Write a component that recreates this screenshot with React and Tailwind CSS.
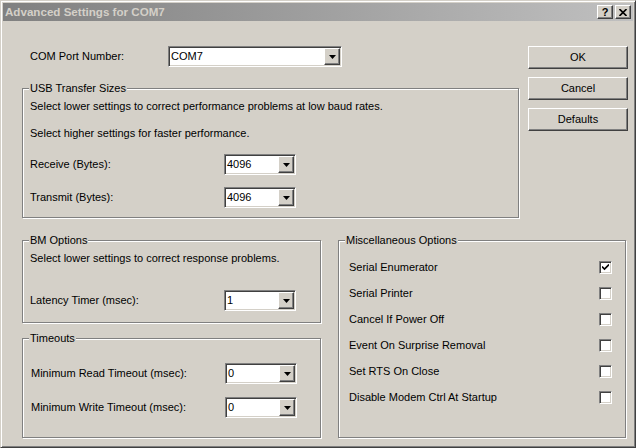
import React from 'react';

// Win2000 classic "Advanced Settings" dialog for an FTDI serial port

const raised =
  'border border-t-white border-l-white border-r-[#404040] border-b-[#404040] shadow-[inset_-1px_-1px_0_#808080]';
const sunken =
  'border border-t-[#808080] border-l-[#808080] border-r-white border-b-white shadow-[inset_1px_1px_0_#404040,inset_-1px_-1px_0_#d4d0c8]';

const Arrow = () => (
  <svg width="7" height="4" viewBox="0 0 7 4">
    <polygon points="0,0 7,0 3.5,4" fill="#000" />
  </svg>
);

const Combo = ({ value, width }) => (
  <div className={`flex h-[21px] items-stretch bg-white ${sunken} ${width}`}>
    <span className="flex flex-1 items-center pl-[2px] leading-[13px]">{value}</span>
    <div className={`m-[1px] flex w-[16px] items-center justify-center bg-[#d4d0c8] ${raised}`}>
      <Arrow />
    </div>
  </div>
);

const Group = ({ title, className, children }) => (
  <div className={`relative border border-[#808080] shadow-[inset_1px_1px_0_#fff,1px_1px_0_#fff] ${className}`}>
    <span className="absolute -top-[7px] left-[6px] bg-[#d4d0c8] px-[1px] leading-[13px]">{title}</span>
    {children}
  </div>
);

const Field = ({ label, value, className = '' }) => (
  <div className={`flex h-[21px] items-center ${className}`}>
    <span className="w-[194px] leading-[13px]">{label}</span>
    <Combo value={value} width="w-[72px]" />
  </div>
);

const Button = ({ children }) => (
  <button className={`flex h-[23px] w-[100px] items-center justify-center bg-[#d4d0c8] leading-[13px] ${raised}`}>
    {children}
  </button>
);

const CheckBox = ({ checked }) => (
  <div className={`flex h-[13px] w-[13px] items-center justify-center bg-white ${sunken}`}>
    {checked && (
      <svg width="7" height="7" viewBox="0 0 7 7">
        <path d="M0 2.5 L2.5 5 L7 0.5" stroke="#000" strokeWidth="1.6" fill="none" />
      </svg>
    )}
  </div>
);

const misc = [
  ['Serial Enumerator', true],
  ['Serial Printer', false],
  ['Cancel If Power Off', false],
  ['Event On Surprise Removal', false],
  ['Set RTS On Close', false],
  ['Disable Modem Ctrl At Startup', false],
];

export default function App() {
  return (
    <div className="h-[448px] w-[636px] border border-t-[#d4d0c8] border-l-[#d4d0c8] border-r-[#404040] border-b-[#404040] bg-[#d4d0c8] p-[2px] font-['Liberation_Sans',Arial,sans-serif] text-[11px] text-black shadow-[inset_1px_1px_0_#fff,inset_-1px_-1px_0_#808080]">
      {/* title bar (inactive) */}
      <div className="flex h-[18px] items-center bg-linear-to-r from-[#808080] to-[#c0c0c0] pl-[2px] pr-[2px]">
        <span className="flex-1 text-[11.6px] font-bold leading-[14px] text-[#d4d0c8]">Advanced Settings for COM7</span>
        <div className={`flex h-[14px] w-[16px] items-center justify-center bg-[#d4d0c8] text-[11px] font-bold leading-none ${raised}`}>
          ?
        </div>
        <div className={`ml-[2px] flex h-[14px] w-[16px] items-center justify-center bg-[#d4d0c8] ${raised}`}>
          <svg width="8" height="7" viewBox="0 0 8 7">
            <path d="M0.5 0 L7.5 7 M7.5 0 L0.5 7" stroke="#000" strokeWidth="1.6" />
          </svg>
        </div>
      </div>

      <div className="pl-[19px] pt-[25px]">
        <div className="flex">
          <div className="w-[497px]">
            <div className="flex h-[21px] items-center">
              <span className="w-[146px] pl-[8px] leading-[13px]">COM Port Number:</span>
              <Combo value="COM7" width="w-[174px]" />
            </div>

            <Group title="USB Transfer Sizes" className="mt-[21px] h-[130px] pl-[7px] pt-[11px]">
              <p className="leading-[13px]">Select lower settings to correct performance problems at low baud rates.</p>
              <p className="mt-[14px] leading-[13px]">Select higher settings for faster performance.</p>
              <Field label="Receive (Bytes):" value="4096" className="mt-[14px]" />
              <Field label="Transmit (Bytes):" value="4096" className="mt-[12px]" />
            </Group>
          </div>

          <div className="ml-[9px] flex flex-col gap-[8px]">
            <Button>OK</Button>
            <Button>Cancel</Button>
            <Button>Defaults</Button>
          </div>
        </div>

        <div className="mt-[22px] flex">
          <div className="w-[299px]">
            <Group title="BM Options" className="h-[83px] pl-[7px] pt-[11px]">
              <p className="leading-[13px]">Select lower settings to correct response problems.</p>
              <Field label="Latency Timer (msec):" value="1" className="mt-[25px]" />
            </Group>

            <Group title="Timeouts" className="mt-[15px] h-[100px] pl-[8px] pt-[24px]">
              <Field label="Minimum Read Timeout (msec):" value="0" />
              <Field label="Minimum Write Timeout (msec):" value="0" className="mt-[13px]" />
            </Group>
          </div>

          <Group title="Miscellaneous Options" className="ml-[17px] h-[198px] w-[288px] pl-[10px] pr-[13px] pt-[13px]">
            {misc.map(([label, on]) => (
              <div key={label} className="flex h-[26px] items-center justify-between">
                <span className="leading-[13px]">{label}</span>
                <CheckBox checked={on} />
              </div>
            ))}
          </Group>
        </div>
      </div>
    </div>
  );
}
